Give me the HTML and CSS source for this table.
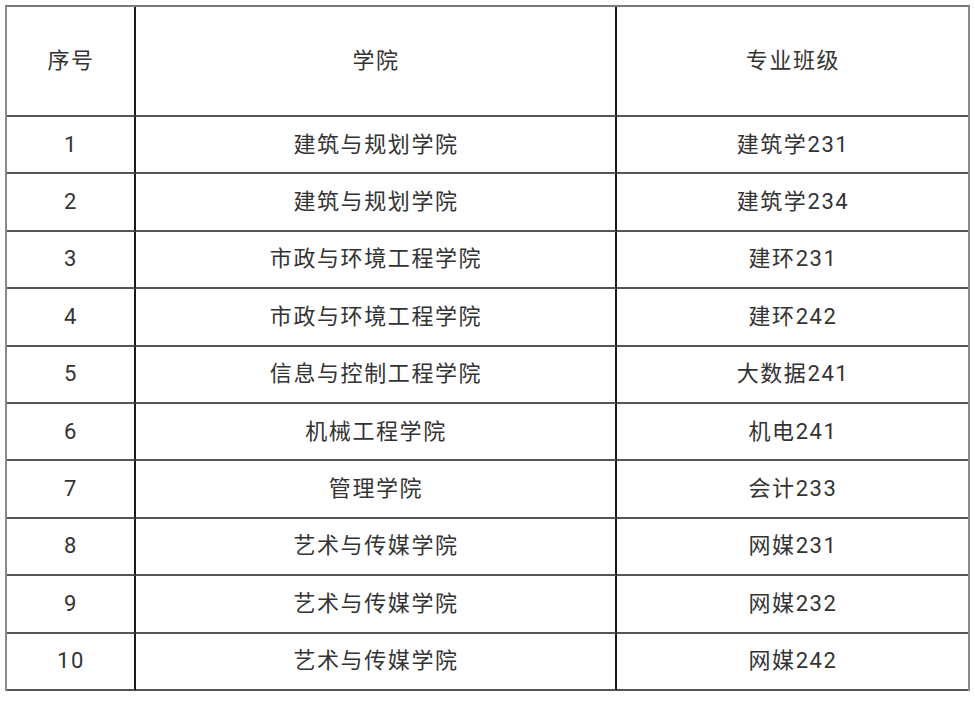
FILE: index.html
```html
<!DOCTYPE html>
<html lang="zh-CN">
<head>
<meta charset="utf-8">
<title>名单</title>
<link rel="stylesheet" href="styles.css">
</head>
<body>
<table class="list">
  <colgroup>
    <col class="c-no">
    <col class="c-college">
    <col class="c-class">
  </colgroup>
  <thead>
    <tr><th>序号</th><th>学院</th><th>专业班级</th></tr>
  </thead>
  <tbody>
    <tr><td>1</td><td>建筑与规划学院</td><td>建筑学231</td></tr>
    <tr><td>2</td><td>建筑与规划学院</td><td>建筑学234</td></tr>
    <tr><td>3</td><td>市政与环境工程学院</td><td>建环231</td></tr>
    <tr><td>4</td><td>市政与环境工程学院</td><td>建环242</td></tr>
    <tr><td>5</td><td>信息与控制工程学院</td><td>大数据241</td></tr>
    <tr><td>6</td><td>机械工程学院</td><td>机电241</td></tr>
    <tr><td>7</td><td>管理学院</td><td>会计233</td></tr>
    <tr><td>8</td><td>艺术与传媒学院</td><td>网媒231</td></tr>
    <tr><td>9</td><td>艺术与传媒学院</td><td>网媒232</td></tr>
    <tr><td>10</td><td>艺术与传媒学院</td><td>网媒242</td></tr>
  </tbody>
</table>
</body>
</html>
```

FILE: styles.css
```css
html, body {
  margin: 0;
  padding: 0;
  background: #ffffff;
}

body {
  padding: 5px 0 0 5px;
  font-family: Roboto, "Noto Sans CJK SC", sans-serif;
  color: #333333;
}

.list {
  border-collapse: separate;
  border-spacing: 0;
  border-top: 2px solid #7a7a7a;
  border-left: 2px solid #8a8a8a;
  border-right: 2px solid #8a8a8a;
  table-layout: fixed;
  width: 961px;
}

.c-no { width: 129px; }
.c-college { width: 481px; }
.c-class { width: 351px; }

.list th,
.list td {
  padding: 0 0 0 1px;
  text-align: center;
  vertical-align: middle;
  font-size: 22px;
  font-weight: normal;
  letter-spacing: 1.6px;
  border-bottom: 2px solid #555555;
  border-right: 2px solid #1a1a1a;
  line-height: 1;
}

.list th:last-child,
.list td:last-child {
  border-right: none;
}

.list th {
  height: 108px;
}

.list td {
  height: 55.4px;
}
```
